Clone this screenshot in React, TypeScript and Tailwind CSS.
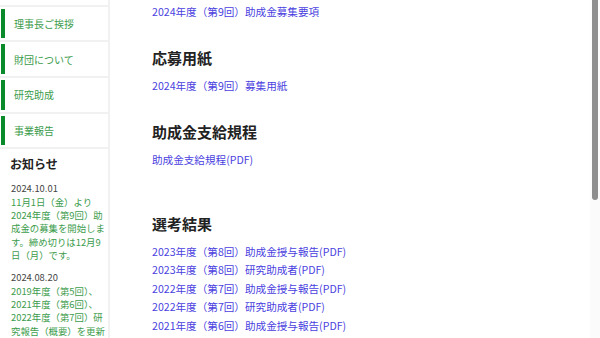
import React from "react";

const menu = ["理事長ご挨拶", "財団について", "研究助成", "事業報告"];

const results = [
  "2023年度（第8回）助成金授与報告(PDF)",
  "2023年度（第8回）研究助成者(PDF)",
  "2022年度（第7回）助成金授与報告(PDF)",
  "2022年度（第7回）研究助成者(PDF)",
  "2021年度（第6回）助成金授与報告(PDF)",
];

const news = [
  {
    date: "2024.10.01",
    lines: ["11月1日（金）より", "2024年度（第9回）助", "成金の募集を開始しま", "す。締め切りは12月9", "日（月）です。"],
  },
  {
    date: "2024.08.20",
    lines: ["2019年度（第5回）、", "2021年度（第6回）、", "2022年度（第7回）研", "究報告（概要）を更新"],
  },
];

const Link = ({ text }: { text: string }) => (
  <a href="#" className="block leading-[18.5px] text-[10.6px] text-[#4a3fe0] whitespace-nowrap">
    {text}
  </a>
);

const Heading = ({ text }: { text: string }) => (
  <h2 className="text-[15px] leading-[22px] font-bold text-[#222] mb-[8px]">{text}</h2>
);

const App = () => {
  return (
    <div className="relative w-[600px] h-[338px] overflow-hidden flex bg-white font-['Noto_Sans_CJK_JP',sans-serif]">
      {/* Sidebar */}
      <aside className="w-[110px] shrink-0 bg-[#f1f1f1] pr-[2px] flex flex-col gap-[2px]">
        <div className="h-[5px] bg-white"></div>
        {menu.map((m) => (
          <div key={m} className="h-[34px] bg-white py-[2px] pl-[1px]">
            <div className="h-full border-l-4 border-[#0b8a2b] flex items-center pl-[9px] text-[10px] text-[#3c9c4c]">
              {m}
            </div>
          </div>
        ))}
        <div className="flex-1 bg-white pl-[11px] pt-[6px]">
          <h3 className="text-[12px] leading-[18px] font-bold text-[#222] -ml-[1px]">お知らせ</h3>
          {news.map((n) => (
            <div key={n.date} className="mt-[9.3px]">
              <p className="text-[9.4px] leading-[13.3px] text-[#444]">{n.date}</p>
              {n.lines.map((l) => (
                <p key={l} className="text-[9.4px] leading-[13.3px] text-[#3c9c4c] whitespace-nowrap">
                  {l}
                </p>
              ))}
            </div>
          ))}
        </div>
      </aside>

      {/* Main */}
      <main className="flex-1 pl-[42px] pt-[3px]">
        <Link text="2024年度（第9回）助成金募集要項" />

        <div className="mt-[25px]">
          <Heading text="応募用紙" />
          <Link text="2024年度（第9回）募集用紙" />
        </div>

        <div className="mt-[26px]">
          <Heading text="助成金支給規程" />
          <Link text="助成金支給規程(PDF)" />
        </div>

        <div className="mt-[43px]">
          <Heading text="選考結果" />
          {results.map((r) => (
            <Link key={r} text={r} />
          ))}
        </div>
      </main>

      {/* Scrollbar */}
      <div className="absolute right-0 top-0 w-[10px] h-full bg-[#fbfbfb]">
        <div className="absolute right-[2px] top-0 w-[6px] h-[200px] rounded-b-full bg-[#8e8e8e]"></div>
      </div>
    </div>
  );
};

export default App;
